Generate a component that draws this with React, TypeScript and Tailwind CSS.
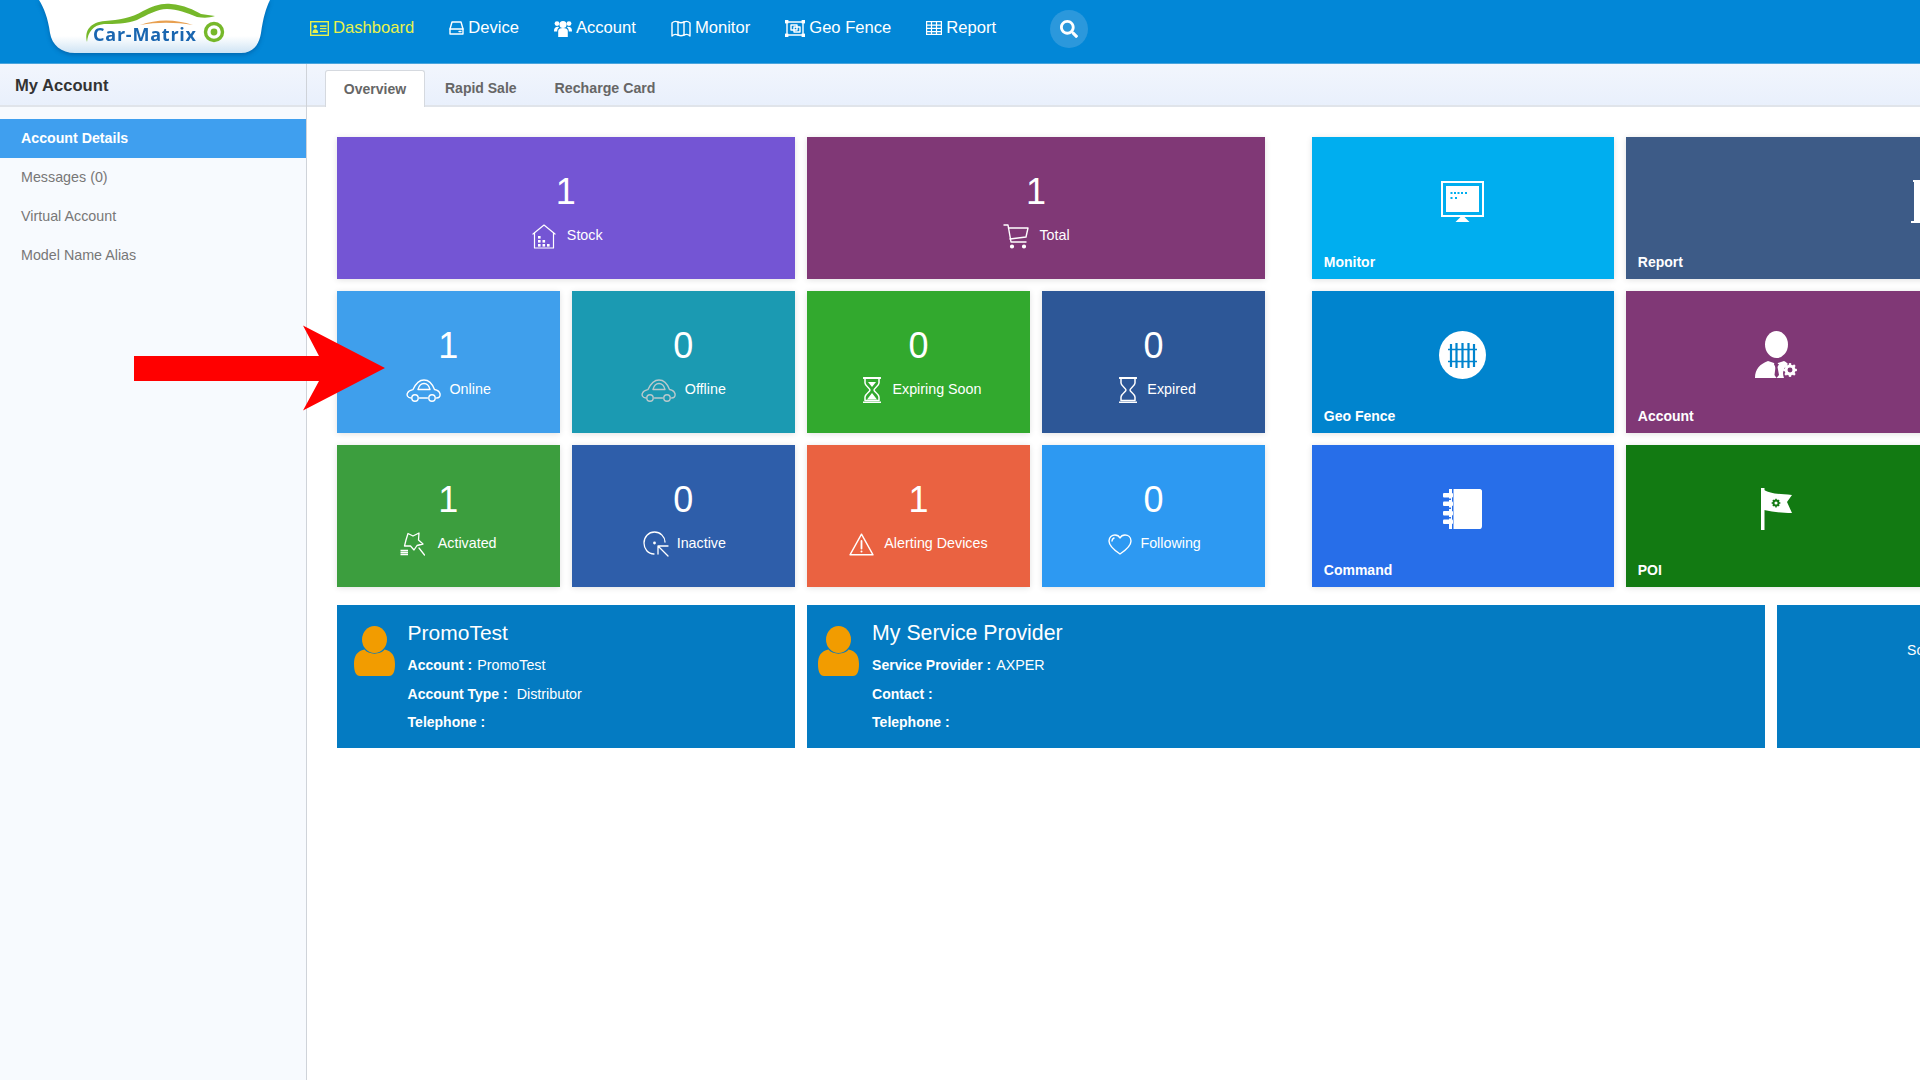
import React from "react";
import { FaSearch } from "react-icons/fa";

const S = { fill: "none", stroke: "currentColor", strokeWidth: 1.4, strokeLinecap: "round" as const, strokeLinejoin: "round" as const };

const Logo = () => (
  <svg width="231" height="56" viewBox="0 0 231 56" className="block drop-shadow-[0_2px_2px_rgba(0,50,110,0.35)]">
    <defs>
      <linearGradient id="tab" x1="0" y1="0" x2="0" y2="1">
        <stop offset="0.68" stopColor="#ffffff" />
        <stop offset="1" stopColor="#cfe4f4" />
      </linearGradient>
    </defs>
    <path d="M0 0 C5 8 9 18 11 33 C13 45 22 53 36 53 L202 53 C214 53 220 45 222 33 C224 18 227 8 231 0 Z" fill="url(#tab)" />
    <path d="M48 42 C45 30 52 22 66 21 C80 20 92 18 104 11 C114 6 122 3 132 4 C145 5 155 10 162 14 L176 16 C170 18 165 18 158 17 C148 13 138 9 128 9 C118 9 108 15 98 20 C88 24 75 24 65 24 C54 25 49 32 48 42 Z" fill="#76b82a" />
    <path d="M101 25 C118 19 136 19 154 25 C136 22 118 22 101 25 Z" fill="#e8a050" />
    <text x="54" y="41" fontFamily="'Open Sans', sans-serif" fontWeight="700" fontSize="18" fill="#1a66b0" textLength="103" lengthAdjust="spacing">Car-Matrix</text>
    <circle cx="175" cy="32" r="8.5" fill="none" stroke="#76b82a" strokeWidth="3.4" />
    <circle cx="175" cy="32" r="3.4" fill="#76b82a" />
  </svg>
);

const IconDash = () => (
  <svg width="19" height="15" viewBox="0 0 19 15" className="text-[#e9f24c]">
    <rect x="0.7" y="0.7" width="17.6" height="13.6" fill="none" stroke="currentColor" strokeWidth="1.4" />
    <circle cx="5.3" cy="5.6" r="1.8" fill="currentColor" />
    <path d="M2.4 12 C2.4 9 4 8.2 5.3 8.2 C6.6 8.2 8.2 9 8.2 12 Z" fill="currentColor" />
    <path d="M10 5 H16.5 M10 7.7 H16.5 M10 10.4 H16.5" stroke="currentColor" strokeWidth="1.3" />
  </svg>
);
const IconDevice = () => (
  <svg width="15" height="14" viewBox="0 0 15 14" {...S}>
    <path d="M3 1 H12 L14 8 V13 H1 V8 Z" />
    <path d="M1 8 H14" />
    <path d="M10 10.5 H12" />
  </svg>
);
const IconUsers = () => (
  <svg width="18" height="17" viewBox="0 0 18 17" fill="currentColor">
    <circle cx="9" cy="4.5" r="3.6" />
    <circle cx="3" cy="3.6" r="2.4" />
    <circle cx="15" cy="3.6" r="2.4" />
    <path d="M4.2 17 V11 C4.2 9 6 8 9 8 C12 8 13.8 9 13.8 11 V17 Z" />
    <path d="M0 11 C0 8 1.5 6.8 4 6.8 C4.6 6.8 5 7 5.2 7.3 C3.8 8.2 3.2 9.5 3.2 11.5 H0 Z" />
    <path d="M18 11 C18 8 16.5 6.8 14 6.8 C13.4 6.8 13 7 12.8 7.3 C14.2 8.2 14.8 9.5 14.8 11.5 H18 Z" />
  </svg>
);
const IconMap = () => (
  <svg width="20" height="17" viewBox="0 0 20 17" {...S}>
    <path d="M1 3 C3 1 5 1 7 2 C9 3 11 3 13 2 C15 1 17 1 19 3 V16 C17 14 15 14 13 15 C11 16 9 16 7 15 C5 14 3 14 1 16 Z" />
    <path d="M7 2 V15 M13 2 V15" />
  </svg>
);
const IconGeo = () => (
  <svg width="20" height="17" viewBox="0 0 20 17" {...S}>
    <rect x="2" y="2" width="16" height="13" />
    <rect x="6" y="5" width="6" height="5" />
    <rect x="9" y="7" width="6" height="5" />
    <g fill="currentColor" stroke="none">
      <rect x="0" y="0" width="3.4" height="3.4" />
      <rect x="16.6" y="0" width="3.4" height="3.4" />
      <rect x="0" y="13.6" width="3.4" height="3.4" />
      <rect x="16.6" y="13.6" width="3.4" height="3.4" />
    </g>
  </svg>
);
const IconTable = () => (
  <svg width="16" height="14" viewBox="0 0 16 14" fill="none" stroke="currentColor" strokeWidth="1.2">
    <rect x="0.6" y="0.6" width="14.8" height="12.8" />
    <path d="M0.6 4.2 H15.4 M0.6 7.4 H15.4 M0.6 10.6 H15.4 M5.5 0.6 V13.4 M10.5 0.6 V13.4" />
  </svg>
);

const IconHouse = () => (
  <svg width="24" height="25" viewBox="0 0 24 25" {...S} strokeWidth={1.2}>
    <path d="M1 10 L12 1 L23 10" />
    <path d="M2.5 9 V24 H21.5 V9" />
    <g fill="currentColor" stroke="none">
      <rect x="6" y="12" width="2.6" height="2.6" />
      <rect x="6" y="16" width="2.6" height="2.6" />
      <rect x="6" y="20" width="2.6" height="2.6" />
      <rect x="10.5" y="16" width="2.6" height="2.6" />
      <rect x="10.5" y="20" width="2.6" height="2.6" />
      <rect x="15" y="20" width="2.6" height="2.6" />
    </g>
  </svg>
);
const IconCart = () => (
  <svg width="26" height="25" viewBox="0 0 26 25" {...S}>
    <path d="M1 1 H5 L8 18 H23" />
    <path d="M5.5 4 H25 L23 13 L7 15" />
    <circle cx="9" cy="22.5" r="1.4" fill="currentColor" />
    <circle cx="21" cy="22.5" r="1.4" fill="currentColor" />
  </svg>
);
const IconCar = ({ className = "" }: { className?: string }) => (
  <svg width="35" height="23" viewBox="0 0 35 23" {...S} className={className}>
    <path d="M5 19 C1.5 19 0.5 16 1.5 14 C2.5 11.5 5 11 7 10.5 C10 4 13 1 18 1 C23 1 26 4 28.5 10.5 C31 11 33.5 12 34 15 C34.5 17.5 33 19 30.5 19" />
    <path d="M12 10.5 C13 6.5 15 4.5 18 4.5 C21 4.5 23 6.5 24 10.5 Z" />
    <circle cx="9" cy="19" r="3.2" />
    <circle cx="26" cy="19" r="3.2" />
    <path d="M13.5 19 H21.5" />
  </svg>
);
const IconGlass = ({ sand }: { sand?: boolean }) => (
  <svg width="18" height="26" viewBox="0 0 18 26" {...S} strokeWidth={1.5}>
    <path d="M0.5 1 H17.5 M0.5 25.3 H17.5" strokeWidth={1.8} />
    <path d="M2 1 V6 C2 9 7 11 7 13 C7 15 2 17 2 20 V23.5 H16 V20 C16 17 11 15 11 13 C11 11 16 9 16 6 V1" />
    {sand && <path d="M5 5 H13 L9 10 Z M9 16 L14 22.5 H4 Z" fill="currentColor" stroke="none" />}
  </svg>
);
const IconWand = () => (
  <svg width="25" height="25" viewBox="0 0 25 25" {...S} strokeWidth={1.3}>
    <path d="M6 8 L8 1.5 L13 4 L19 1 L18.5 8 L23 12 L17 13.5 L14 18 L10.5 14 L4.5 14 Z" />
    <path d="M19 16 L24.5 23" />
    <path d="M0.5 18.5 H8 M0.5 20.5 H8 M0.5 22.5 H8" strokeWidth={1.6} strokeLinecap="butt" />
  </svg>
);
const IconCursor = () => (
  <svg width="26" height="26" viewBox="0 0 26 26" {...S} strokeWidth={1.3}>
    <path d="M11 23 C5 23 1 18 1 12 C1 6 5.5 1 11.5 1 C17.5 1 22 6 22 11" />
    <circle cx="11.5" cy="12" r="1.4" fill="currentColor" stroke="none" />
    <path d="M15 15 L25 25 M15 15 V23 M15 15 H25" />
  </svg>
);
const IconWarn = () => (
  <svg width="25" height="23" viewBox="0 0 25 23" {...S}>
    <path d="M12.5 1.2 L24 21.8 H1 Z" />
    <path d="M12.5 8 V15.5" strokeWidth={1.8} />
    <circle cx="12.5" cy="18.5" r="1" fill="currentColor" stroke="none" />
  </svg>
);
const IconHeart = () => (
  <svg width="24" height="21" viewBox="0 0 24 21" {...S}>
    <path d="M12 20 C6 16 1 12 1 7 C1 3 4 1 7 1 C9 1 11 2 12 4 C13 2 15 1 17 1 C20 1 23 3 23 7 C23 12 18 16 12 20 Z" />
    <path d="M4 7 C4 5.5 5 4.5 6 4" />
  </svg>
);

const TileMonitor = () => (
  <svg width="43" height="41" viewBox="0 0 43 41">
    <rect x="1" y="1" width="41" height="34" fill="none" stroke="#fff" strokeWidth="2" />
    <rect x="5" y="5" width="33" height="26" fill="#fff" />
    <g fill="#00aeef">
      <rect x="9.5" y="11" width="2" height="2" /><rect x="13" y="11" width="2" height="2" /><rect x="16.5" y="11" width="2" height="2" /><rect x="20" y="11" width="2" height="2" /><rect x="24" y="11" width="2" height="2" />
      <rect x="9.5" y="16" width="2" height="2" /><rect x="14" y="16" width="2" height="2" />
    </g>
    <path d="M21.5 34 L28.5 41 H14.5 Z" fill="#fff" />
  </svg>
);
const TileFence = () => (
  <svg width="47" height="48" viewBox="0 0 47 48">
    <ellipse cx="23.5" cy="24" rx="23.5" ry="24" fill="#fff" />
    <g stroke="#0084ce" strokeWidth="2.2" fill="none">
      <path d="M12 13 V36 M17.5 12 V37 M23.5 12 V37 M29.5 12 V37 M35 13 V36" />
      <path d="M9 18.5 H38 M9 30.5 H38" strokeWidth="1.6" />
    </g>
  </svg>
);
const Gear = ({ cx, cy, r, fill, hole }: { cx: number; cy: number; r: number; fill: string; hole: string }) => (
  <g>
    <g stroke={fill} strokeWidth={r * 0.42}>
      {[0, 45, 90, 135].map((a) => (
        <line key={a} x1={cx - r * 1.25} y1={cy} x2={cx + r * 1.25} y2={cy} transform={`rotate(${a} ${cx} ${cy})`} />
      ))}
    </g>
    <circle cx={cx} cy={cy} r={r} fill={fill} />
    <circle cx={cx} cy={cy} r={r * 0.45} fill={hole} />
  </g>
);
const TileAccount = () => (
  <svg width="43" height="48" viewBox="0 0 43 48">
    <ellipse cx="21.5" cy="13.5" rx="11.5" ry="13.5" fill="#fff" />
    <path d="M0 47 C0 38 5 33 13 30 L19 32 L21 38 L23 32 L29 30 C31 31 32 32 33 33 C28 37 27 42 29 47 Z" fill="#fff" />
    <path d="M19 33 H24 L22.5 36 L24 44 L21.5 47 L19.5 44 L20.5 36 Z" fill="#803876" />
    <Gear cx={35} cy={39} r={5.5} fill="#fff" hole="#803876" />
  </svg>
);
const TileBook = () => (
  <svg width="39" height="40" viewBox="0 0 39 40">
    <path d="M6 0 H37 C38 0 39 1 39 2 V37 C39 39 38 40 37 40 H6 Z" fill="#fff" />
    <rect x="9" y="0" width="1.5" height="40" fill="#276ee9" />
    <g fill="#fff">
      <rect x="0" y="4" width="10" height="4.5" rx="1" />
      <rect x="0" y="12.5" width="10" height="4.5" rx="1" />
      <rect x="0" y="22" width="10" height="4.5" rx="1" />
      <rect x="0" y="30.5" width="10" height="4.5" rx="1" />
    </g>
    <g fill="#276ee9">
      <rect x="3" y="9.5" width="5" height="1.5" />
      <rect x="3" y="18.5" width="5" height="1.5" />
      <rect x="3" y="28" width="5" height="1.5" />
    </g>
  </svg>
);
const TileFlag = () => (
  <svg width="31" height="42" viewBox="0 0 31 42">
    <rect x="0" y="0" width="3.5" height="42" fill="#fff" />
    <path d="M3 2 C9 5 14 6 31 7 L26 14 L31 25 C20 25 12 24 3 22 Z" fill="#fff" />
    <Gear cx={15} cy={15} r={3.5} fill="#127a12" hole="#fff" />
  </svg>
);
const TileReport = () => (
  <svg width="46" height="43" viewBox="0 0 46 43">
    <rect x="0" y="41" width="46" height="2" fill="#fff" />
    <rect x="2" y="0" width="42" height="2" fill="#fff" />
    <rect x="3" y="0" width="8" height="42" fill="#fff" />
    <rect x="35" y="0" width="8" height="42" fill="#fff" />
  </svg>
);
const Avatar = () => (
  <svg width="41" height="50" viewBox="0 0 41 50" className="shrink-0">
    <ellipse cx="20.5" cy="13.5" rx="12.5" ry="13.5" fill="#f29c00" />
    <path d="M0 38 C0 30 3 25 10.5 23.5 C14 29 27 29 30.5 23.5 C38 25 41 30 41 38 C41 46 39 50 35 50 H6 C2 50 0 46 0 38 Z" fill="#f29c00" />
  </svg>
);

const Stat = ({ bg, value, label, icon, gap, span, shift }: { bg: string; value: string; label: string; icon: React.ReactNode; gap: string; span?: string; shift?: string }) => (
  <div className={`${bg} ${span ?? ""} h-[142px] flex flex-col items-center pt-[35px] text-white shadow-[0_1px_6px_rgba(0,0,0,0.12)]`}>
    <div className="h-[40px] text-[36px] leading-[40px]">{value}</div>
    <div className={`mt-[10px] h-[28px] flex items-center ${gap} ${shift ?? ""} text-[14.3px]`}>
      {icon}
      <span>{label}</span>
    </div>
  </div>
);

const Shortcut = ({ bg, label, icon, pt, span }: { bg: string; label: string; icon: React.ReactNode; pt: string; span?: string }) => (
  <div className={`${bg} ${span ?? ""} ${pt} h-[142px] flex flex-col justify-between pb-[8px] text-white shadow-[0_1px_6px_rgba(0,0,0,0.12)]`}>
    <div className="flex justify-center">{icon}</div>
    <div className="pl-[12px] text-[14px] font-bold leading-[18px]">{label}</div>
  </div>
);

const Row = ({ k, v, gap }: { k: string; v?: string; gap?: string }) => (
  <div className="h-[28.5px] leading-[28.5px] text-[14px]">
    <span className="font-bold">{k}</span>
    {v && <span className={`${gap ?? "ml-[5px]"} text-[14.3px]`}>{v}</span>}
  </div>
);

const NavItem = ({ icon, label, active }: { icon: React.ReactNode; label: string; active?: boolean }) => (
  <div className={`flex items-center gap-[4px] text-[16.6px] ${active ? "text-[#e9f24c]" : "text-white"}`}>
    {icon}
    <span>{label}</span>
  </div>
);

const SideItem = ({ label, active }: { label: string; active?: boolean }) => (
  <div className={`h-[39px] pl-[21px] flex items-center ${active ? "bg-[#3f9fef] text-white font-bold text-[14.2px]" : "text-[#777777] text-[14.3px]"}`}>{label}</div>
);

export default function App() {
  return (
    <div className="w-[1920px] h-[1080px] overflow-hidden bg-white relative [font-family:'Liberation_Sans',Arial,sans-serif]">
      <header className="h-[64px] bg-[#0287d7] border-b border-[#4aa5dd] pl-[39px] flex items-start">
        <Logo />
        <nav className="ml-[40px] h-[57px] flex items-center gap-[35px] text-white">
          <NavItem active icon={<IconDash />} label="Dashboard" />
          <NavItem icon={<IconDevice />} label="Device" />
          <NavItem icon={<IconUsers />} label="Account" />
          <NavItem icon={<IconMap />} label="Monitor" />
          <NavItem icon={<IconGeo />} label="Geo Fence" />
          <NavItem icon={<IconTable />} label="Report" />
          <div className="ml-[19px] w-[38px] h-[38px] rounded-full bg-[#2b98dc] flex items-center justify-center">
            <FaSearch size={18} />
          </div>
        </nav>
      </header>
      <div className="flex h-[1016px]">
        <aside className="w-[307px] shrink-0 border-r border-[#cfd3d9] bg-[#f7fafe]">
          <div className="h-[43px] pl-[15px] pt-[3px] flex items-center text-[16.6px] font-bold text-[#333333] bg-gradient-to-b from-[#f2f6fd] to-[#e9f0fc] border-b-2 border-[#e0e4ea]">My Account</div>
          <div className="pt-[12px]">
            <SideItem active label="Account Details" />
            <SideItem label="Messages (0)" />
            <SideItem label="Virtual Account" />
            <SideItem label="Model Name Alias" />
          </div>
        </aside>
        <main className="flex-1 min-w-0 relative">
          <div className="h-[43px] bg-gradient-to-b from-[#f2f6fd] to-[#e9f0fc] border-b-2 border-[#e0e4ea] flex items-end pl-[18px] text-[14px] font-bold text-[#666666]">
            <div className="w-[100px] h-[37px] -mb-[2px] bg-white border border-b-0 border-[#d5d9df] rounded-t-[3px] flex items-center justify-center">Overview</div>
            <div className="ml-[20px] h-[35px] -mb-[1px] flex items-center">Rapid Sale</div>
            <div className="ml-[38px] h-[35px] -mb-[1px] flex items-center text-[14.2px]">Recharge Card</div>
          </div>
          <div className="pl-[29.6px] pt-[30px]">
            <div className="flex gap-[46.6px] w-[2000px]">
              <div className="w-[928.6px] shrink-0 grid grid-cols-4 gap-[12px]">
                <Stat span="col-span-2" bg="bg-[#7455d4]" value="1" label="Stock" gap="gap-[11px]" shift="ml-[3px]" icon={<IconHouse />} />
                <Stat span="col-span-2" bg="bg-[#803876]" value="1" label="Total" gap="gap-[10px]" shift="ml-[1px]" icon={<IconCart />} />
                <Stat bg="bg-[#3f9fec]" value="1" label="Online" gap="gap-[9px]" icon={<IconCar />} />
                <Stat bg="bg-[#1b9ab2]" value="0" label="Offline" gap="gap-[9px]" icon={<IconCar className="text-[#b9c9cc]" />} />
                <Stat bg="bg-[#32a92e]" value="0" label="Expiring Soon" gap="gap-[11px]" shift="ml-[8px]" icon={<IconGlass sand />} />
                <Stat bg="bg-[#2d5797]" value="0" label="Expired" gap="gap-[10px]" shift="ml-[8px]" icon={<IconGlass />} />
                <Stat bg="bg-[#3c9e3e]" value="1" label="Activated" gap="gap-[13px]" icon={<IconWand />} />
                <Stat bg="bg-[#2e5eaa]" value="0" label="Inactive" gap="gap-[8px]" shift="ml-[2px]" icon={<IconCursor />} />
                <Stat bg="bg-[#ea6241]" value="1" label="Alerting Devices" gap="gap-[10px]" icon={<IconWarn />} />
                <Stat bg="bg-[#2d99f2]" value="0" label="Following" gap="gap-[8px]" shift="ml-[2px]" icon={<IconHeart />} />
              </div>
              <div className="shrink-0 grid grid-cols-[302px_302px_302px] gap-[12px] content-start">
                <Shortcut pt="pt-[44px]" bg="bg-[#00aeef]" label="Monitor" icon={<TileMonitor />} />
                <Shortcut pt="pt-[43px]" span="col-span-2" bg="bg-[#3d5b87]" label="Report" icon={<TileReport />} />
                <Shortcut pt="pt-[40px]" span="col-start-1" bg="bg-[#0084ce]" label="Geo Fence" icon={<TileFence />} />
                <Shortcut pt="pt-[40px]" bg="bg-[#803876]" label="Account" icon={<TileAccount />} />
                <Shortcut pt="pt-[44px]" span="col-start-1" bg="bg-[#276ee9]" label="Command" icon={<TileBook />} />
                <Shortcut pt="pt-[43px]" bg="bg-[#127a12]" label="POI" icon={<TileFlag />} />
              </div>
            </div>
            <div className="mt-[18px] flex gap-[12px] w-[2000px] text-white">
              <div className="w-[458.5px] h-[143px] shrink-0 bg-[#047bc2] flex pl-[17px] pt-[21px]">
                <Avatar />
                <div className="ml-[13px] -mt-[9px]">
                  <div className="text-[21px] leading-[32px] mb-[2px]">PromoTest</div>
                  <Row k="Account :" v="PromoTest" />
                  <Row k="Account Type :" v="Distributor" gap="ml-[9px]" />
                  <Row k="Telephone :" />
                </div>
              </div>
              <div className="w-[958px] h-[143px] shrink-0 bg-[#047bc2] flex pl-[11px] pt-[21px]">
                <Avatar />
                <div className="ml-[13px] -mt-[9px]">
                  <div className="text-[21.3px] leading-[32px] mb-[2px]">My Service Provider</div>
                  <Row k="Service Provider :" v="AXPER" />
                  <Row k="Contact :" />
                  <Row k="Telephone :" />
                </div>
              </div>
              <div className="w-[458px] h-[143px] shrink-0 bg-[#047bc2] pl-[130px] pt-[36px] text-[14px] leading-[18px]">Scan</div>
            </div>
          </div>
        </main>
      </div>
      <svg width="254" height="86" viewBox="0 0 254 86" className="absolute left-[133px] top-[324.5px]">
        <path d="M1 31 H186 L170 0.5 L252 43 L170 85.5 L186 56 H1 Z" fill="#ff0000" />
      </svg>
    </div>
  );
}
